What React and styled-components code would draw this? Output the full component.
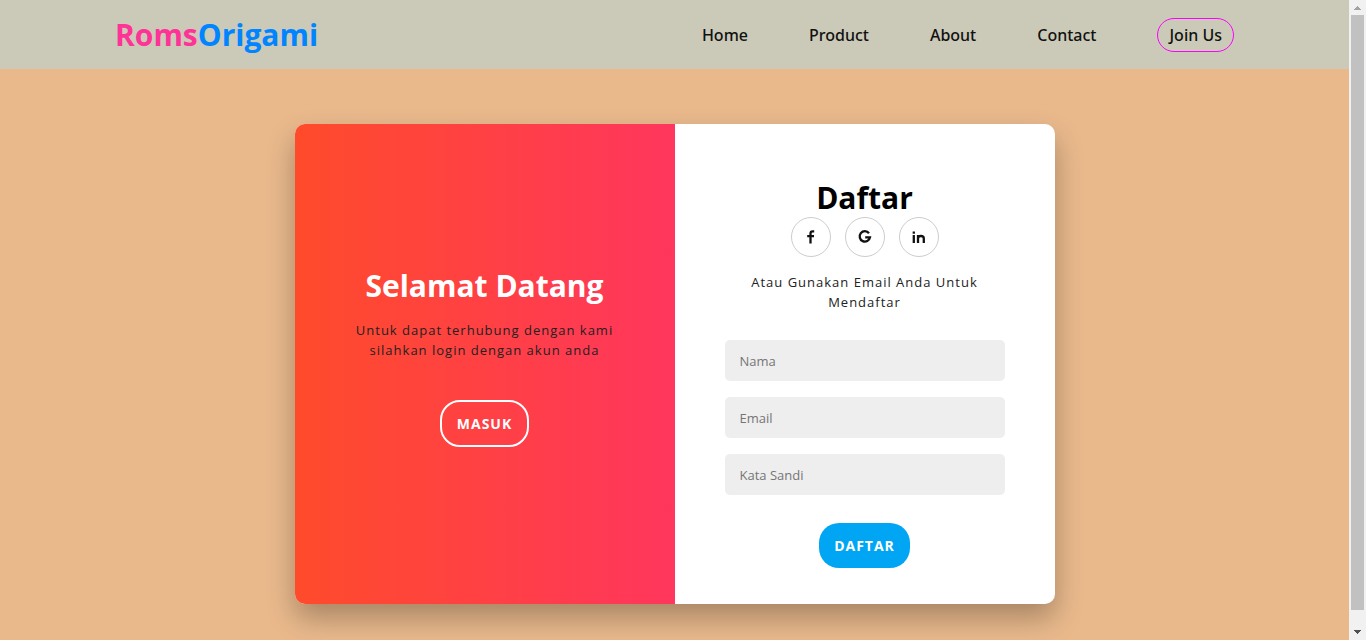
import React from "react";
import styled, { createGlobalStyle } from "styled-components";

const GlobalStyle = createGlobalStyle`
  * { box-sizing: border-box; margin: 0; padding: 0; }
  body {
    background: #e9b98c;
    color: #000;
    font-family: "Open Sans", "Noto Sans", sans-serif;
  }
`;

const Window = styled.div`
  display: flex;
  min-height: 100vh;
`;

const Page = styled.div`
  flex: 1;
  display: flex;
  flex-direction: column;
`;

const Header = styled.header`
  display: flex;
  align-items: center;
  justify-content: space-between;
  height: 69px;
  padding: 0 115px;
  background: #cbcab8;
`;

const Logo = styled.a`
  color: #0084ff;
  font-size: 30px;
  line-height: 46px;
  font-weight: 700;
  text-decoration: none;
`;

const LogoAccent = styled.span`
  color: #ff3296;
`;

const Nav = styled.nav`
  display: flex;
  align-items: center;
  gap: 61px;
`;

const NavLink = styled.a`
  padding: ${(p) => (p.$outlined ? "5px 11px" : "5px 0")};
  border: ${(p) => (p.$outlined ? "1px solid #ff00ff" : "0")};
  border-radius: 20px;
  color: #111;
  font-family: "Noto Sans", sans-serif;
  font-size: 16px;
  line-height: 22px;
  font-weight: 500;
  text-decoration: none;
`;

const Main = styled.main`
  flex: 1;
  padding: 55px 20px 36px;
`;

const Card = styled.section`
  display: grid;
  grid-template-columns: 1fr 1fr;
  width: 100%;
  max-width: 760px;
  min-height: 480px;
  margin: 0 auto;
  overflow: hidden;
  background: #fff;
  border-radius: 10px;
  box-shadow: 0 14px 28px rgba(0, 0, 0, 0.28);
`;

const Panel = styled.div`
  display: flex;
  flex-direction: column;
  align-items: center;
  justify-content: center;
  padding: 0 40px 15px;
  text-align: center;
  background: linear-gradient(to right, #ff4b2b, #ff365d);
`;

const Form = styled.form`
  display: flex;
  flex-direction: column;
  align-items: center;
  justify-content: center;
  padding: 18px 50px 0;
  text-align: center;
`;

const Title = styled.h1`
  color: ${(p) => (p.$light ? "#fff" : "#000")};
  font-size: 30px;
  line-height: 38px;
  font-weight: 700;
`;

const Text = styled.p`
  margin: ${(p) => p.$margin};
  color: #222;
  font-size: 13px;
  line-height: 20px;
  font-weight: 500;
  letter-spacing: 1px;
`;

const Socials = styled.div`
  display: flex;
  gap: 14px;
`;

const SocialLink = styled.a`
  display: flex;
  align-items: center;
  justify-content: center;
  width: 40px;
  height: 40px;
  border: 1px solid #ccc;
  border-radius: 50%;
  color: #111;
`;

const Fields = styled.div`
  display: flex;
  flex-direction: column;
  gap: 16px;
  width: 100%;
  margin-bottom: 28px;
`;

const Input = styled.input`
  width: 100%;
  height: 41px;
  padding: 2px 15px 0;
  border: 0;
  border-radius: 5px;
  background: #eee;
  font-family: inherit;
  font-size: 13px;
  &::placeholder { color: #757575; }
`;

const Button = styled.button`
  height: ${(p) => (p.$outlined ? "47px" : "45px")};
  padding: 0 15px;
  border: ${(p) => (p.$outlined ? "2px solid #fff" : "0")};
  border-radius: 20px;
  background: ${(p) => (p.$outlined ? "transparent" : "#00a5f4")};
  color: #fff;
  font-family: inherit;
  font-size: 14px;
  font-weight: 700;
  letter-spacing: 1px;
  text-transform: uppercase;
`;

const ScrollRail = styled.div`
  display: flex;
  flex-direction: column;
  align-items: center;
  width: 17px;
  background: #f1f1f1;
`;

const ScrollThumb = styled.div`
  flex: 1;
  width: 13px;
  background: #c1c1c1;
`;

const ArrowBox = styled.div`
  display: flex;
  align-items: center;
  justify-content: center;
  height: ${(p) => (p.$down ? "30px" : "15px")};
  padding-top: ${(p) => (p.$down ? "14px" : "0")};
`;

function Arrow({ down }) {
  return (
    <ArrowBox $down={down}>
      <svg width="7" height="4" viewBox="0 0 7 4" shapeRendering="crispEdges">
        <path d={down ? "M0 0h7L3.5 4z" : "M0 4h7L3.5 0z"} fill={down ? "#505050" : "#a3a3a3"} />
      </svg>
    </ArrowBox>
  );
}

const marks = {
  facebook: "M11.2 2.3H9.6Q7.5 2.3 7.5 4.6V14.5M4.2 7.2H11",
  google: "M12 4.2A5.2 5.2 0 1 0 13 8.3H8.2",
  linkedin: "M2.8 6V14M2.8 2.6V4.8M7 14V6M7 9.6Q7 7 9.9 7Q12.8 7 12.8 9.6V14",
};

function Mark({ name }) {
  return (
    <svg width="16" height="16" viewBox="0 0 16 16" fill="none" stroke="currentColor" strokeWidth="2.3" aria-hidden="true">
      <path d={marks[name]} />
    </svg>
  );
}

export default function App() {
  return (
    <>
      <GlobalStyle />
      <Window>
        <Page>
          <Header>
            <Logo href="#"><LogoAccent>Roms</LogoAccent>Origami</Logo>
            <Nav>
              <NavLink href="#home">Home</NavLink>
              <NavLink href="#product">Product</NavLink>
              <NavLink href="#about">About</NavLink>
              <NavLink href="#contact">Contact</NavLink>
              <NavLink href="#join" $outlined>Join Us</NavLink>
            </Nav>
          </Header>
          <Main>
            <Card>
              <Panel>
                <Title $light>Selamat Datang</Title>
                <Text $margin="15px 0 40px">
                  Untuk dapat terhubung dengan kami silahkan login dengan akun anda
                </Text>
                <Button type="button" $outlined>Masuk</Button>
              </Panel>
              <Form onSubmit={(e) => e.preventDefault()}>
                <Title>Daftar</Title>
                <Socials>
                  <SocialLink href="#facebook" aria-label="Facebook"><Mark name="facebook" /></SocialLink>
                  <SocialLink href="#google" aria-label="Google"><Mark name="google" /></SocialLink>
                  <SocialLink href="#linkedin" aria-label="LinkedIn"><Mark name="linkedin" /></SocialLink>
                </Socials>
                <Text $margin="15px 0 28px">Atau Gunakan Email Anda Untuk Mendaftar</Text>
                <Fields>
                  <Input type="text" placeholder="Nama" aria-label="Nama" />
                  <Input type="email" placeholder="Email" aria-label="Email" />
                  <Input type="password" placeholder="Kata Sandi" aria-label="Kata Sandi" />
                </Fields>
                <Button type="submit">Daftar</Button>
              </Form>
            </Card>
          </Main>
        </Page>
        <ScrollRail aria-hidden="true">
          <Arrow />
          <ScrollThumb />
          <Arrow down />
        </ScrollRail>
      </Window>
    </>
  );
}
